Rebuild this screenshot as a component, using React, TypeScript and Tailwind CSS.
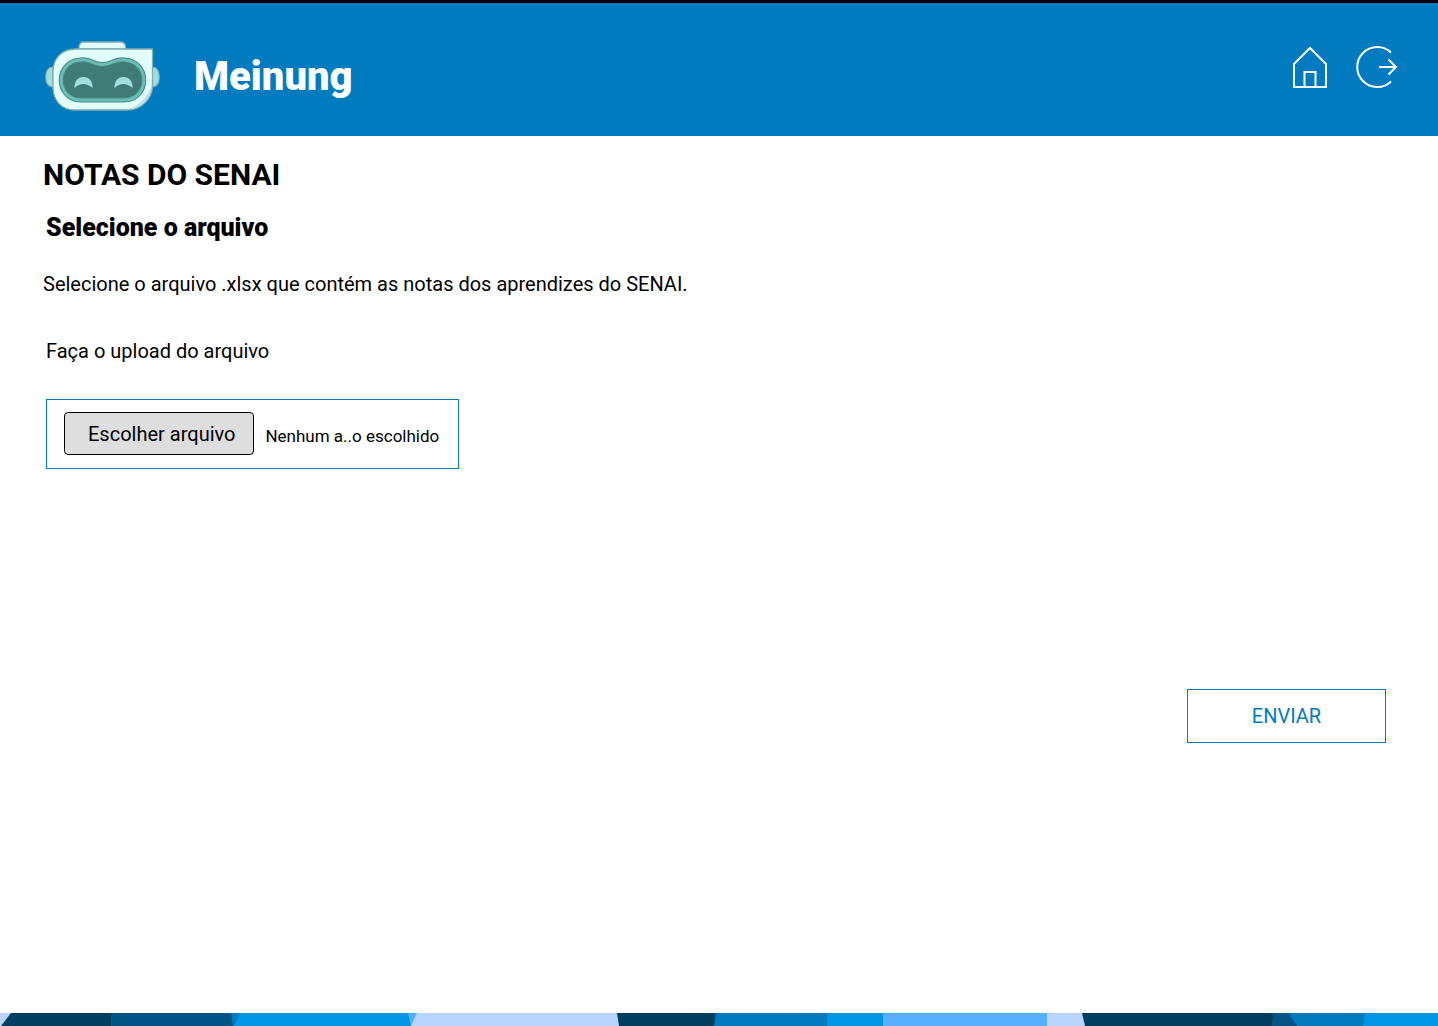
import { useRef } from "react";

const VISOR =
  "M80 60C91 58.500 92 64.500 102.500 64.500S114 58.500 125 60C137 61 143.800 70 143.800 80C143.800 91 136 100 124.500 100H80.500C69 100 61.200 91 61.200 80C61.200 70 68 61 80 60Z";

function RobotLogo() {
  return (
    <svg className="h-[72px] w-[116px] shrink-0" viewBox="45 40 116 72" aria-hidden="true">
      <g stroke="#83aeb1" strokeWidth="1.3">
        <path d="M53 67.500H50.500Q45.800 69 45.800 77T50.500 86.500H53Z" fill="#a0dfdc" />
        <path d="M152 67.500H154.500Q159.200 69 159.200 77T154.500 86.500H152Z" fill="#a0dfdc" />
        <path d="M79 49V46.500Q79.500 42 84 42H120.500Q125 42 125.500 46.500V49Z" fill="#e2fffc" />
        <path d="M76 49H152.500V85C152.500 99 141 110 127 110H75C61 110 53 100 53 87V72C53 58 62 49 76 49Z" fill="#e2fffc" />
      </g>
      <path d="M151.800 82V85C151.800 98 141 109.300 127 109.300C138 107 150 96 151.800 82Z" fill="#c4e0df" />
      <path d={VISOR} fill="#407b77" stroke="#438b86" strokeWidth="5" />
      <path d={VISOR} fill="none" stroke="#6dbdb5" strokeWidth="3" />
      <path d="M74.500 88C74.500 81 77.500 77 83.500 77S92.500 81 92.500 88Q83.500 80 74.500 88Z" fill="#a0dedc" />
      <path d="M114.500 88C114.500 81 117.500 77 123.500 77S132.500 81 132.500 88Q123.500 80 114.500 88Z" fill="#a0dedc" />
    </svg>
  );
}

function HomeIcon() {
  return (
    <svg className="h-[42px] w-9" viewBox="1292 46 36 42" fill="none" stroke="white" strokeWidth="2" aria-hidden="true">
      <path d="M1294 87V64L1310 48L1326 64V87Z" />
      <path d="M1304.500 87V72H1315.500V87" />
    </svg>
  );
}

function LogoutIcon() {
  return (
    <svg className="h-[42px] w-[42px]" viewBox="1356 46 42 42" fill="none" stroke="white" strokeWidth="2" aria-hidden="true">
      <path d="M1391 52.500A20 20 0 1 0 1391 81.500" />
      <path d="M1379 67H1396M1388.500 59.500L1396 67L1388.500 74.500" />
    </svg>
  );
}

function FooterBand() {
  return (
    <svg className="block h-[13px] w-full" viewBox="0 0 1438 13" preserveAspectRatio="none" aria-hidden="true">
      <path d="M0 0H1438V13H0Z" fill="#b8d5ff" />
      <path d="M11 0H112V13H1Z" fill="#003e61" />
      <path d="M111 0H235V13H111Z" fill="#005587" />
      <path d="M231 0H242L236 13H233Z" fill="#007bc0" />
      <path d="M407 0H417L411 13H405Z" fill="#56b0ff" />
      <path d="M240 0H408L411 13H234Z" fill="#0096e8" />
      <path d="M617 0H717V13H619Z" fill="#003e61" />
      <path d="M716 0H828V13H714Z" fill="#007bc0" />
      <path d="M827 0H884V13H827Z" fill="#0096e8" />
      <path d="M883 0H1047V13H883Z" fill="#56b0ff" />
      <path d="M1082 0H1275V13H1085Z" fill="#003e61" />
      <path d="M1273 0H1300V13H1272Z" fill="#005587" />
      <path d="M1289 0H1367V13H1297Z" fill="#007bc0" />
      <path d="M1365 0H1438V13H1363Z" fill="#0096e8" />
    </svg>
  );
}

export default function App() {
  const fileInput = useRef<HTMLInputElement>(null);

  return (
    <div className="flex min-h-screen flex-col bg-white font-[Roboto,sans-serif] text-black">
      <header className="flex items-start justify-between border-t-3 border-black bg-[#007bc0] pt-[37px] pr-10 pb-[22px] pl-[45px]">
        <div className="flex items-start gap-[33px]">
          <RobotLogo />
          <span className="text-[40px] leading-[74px] font-black text-white">Meinung</span>
        </div>
        <nav className="mt-[6px] flex gap-7">
          <a href="#inicio" aria-label="Início"><HomeIcon /></a>
          <a href="#sair" aria-label="Sair"><LogoutIcon /></a>
        </nav>
      </header>

      <main className="flex flex-1 flex-col pr-[52px] pl-[43px]">
        <h1 className="mt-5 text-[30px] leading-[38px] font-bold">NOTAS DO SENAI</h1>
        <h2 className="mt-[18px] ml-[3px] text-[25px] leading-8 font-black">Selecione o arquivo</h2>
        <p className="mt-7 text-[20px] leading-6">
          Selecione o arquivo .xlsx que contém as notas dos aprendizes do SENAI.
        </p>
        <form className="flex flex-col" onSubmit={(e) => e.preventDefault()}>
          <label htmlFor="arquivo" className="mt-[43px] ml-[3px] text-[20px] leading-6">
            Faça o upload do arquivo
          </label>
          <div className="mt-9 ml-[3px] flex items-center self-start border border-[#007bc0] pt-3 pr-[19px] pb-[13px] pl-[17px]">
            <input ref={fileInput} id="arquivo" type="file" accept=".xlsx" className="hidden" />
            <button
              type="button"
              onClick={() => fileInput.current?.click()}
              className="h-[43px] rounded-[4px] border border-black bg-[#dedede] pr-[18px] pl-[23px] text-[20px] leading-6"
            >
              Escolher arquivo
            </button>
            <span className="mt-1 ml-[11px] text-[17px] leading-6">Nenhum a..o escolhido</span>
          </div>
          <button
            type="submit"
            className="mt-[220px] h-[54px] w-[199px] self-end border border-[#007bc0] text-[20px] leading-6 text-[#007bc0]"
          >
            ENVIAR
          </button>
        </form>
      </main>

      <footer>
        <FooterBand />
      </footer>
    </div>
  );
}
